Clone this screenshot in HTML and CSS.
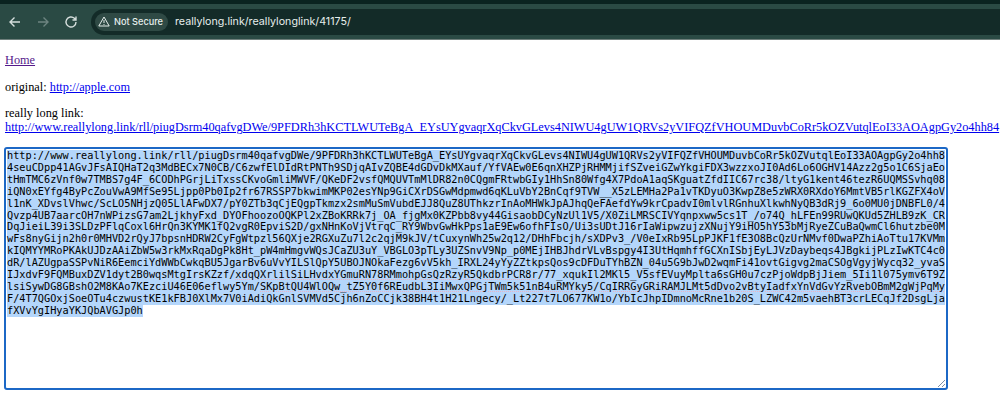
FILE: index.html
```html
<!DOCTYPE html>
<html lang="en">
<head>
<meta charset="utf-8">
<title>reallylong.link</title>
<link rel="stylesheet" href="styles.css">
</head>
<body>
<header class="toolbar">
  <div class="nav">
    <svg class="icon" width="16" height="16" viewBox="0 0 16 16"><path d="M13 8H3M7.5 3.5 3 8l4.5 4.5"/></svg>
    <svg class="icon dim" width="16" height="16" viewBox="0 0 16 16"><path d="M3 8h10M8.5 3.5 13 8l-4.5 4.5"/></svg>
    <svg class="icon" width="16" height="16" viewBox="0 0 16 16"><path d="M13 8a5 5 0 1 1-1.6-3.7L13 6M13 2.5V6H9.5"/></svg>
  </div>
  <div class="omnibox">
    <div class="chip">
      <svg class="warn" width="12" height="11" viewBox="0 0 12 11"><path d="M6 1 11.2 10H.8Z"/><path d="M6 4v3M6 8v.9"/></svg>
      <span>Not Secure</span>
    </div>
    <span class="url">reallylong.link/reallylonglink/41175/</span>
  </div>
</header>
<main class="page">
  <p class="para"><a class="visited" href="#home">Home</a></p>
  <p class="para tight">original: <a class="link" href="#apple">http://apple.com</a></p>
  <p class="para long">really long link:<br><a class="link" href="#long">http://www.reallylong.link/rll/piugDsrm40qafvgDWe/9PFDRh3hKCTLWUTeBgA_EYsUYgvaqrXqCkvGLevs4NIWU4gUW1QRVs2yVIFQZfVHOUMDuvbCoRr5kOZVutqlEoI33AOAgpGy2o4hh84</a></p>
  <div class="area">
    <div class="ln">http://www.reallylong.link/rll/piugDsrm40qafvgDWe/9PFDRh3hKCTLWUTeBgA_EYsUYgvaqrXqCkvGLevs4NIWU4gUW1QRVs2yVIFQZfVHOUMDuvbCoRr5kOZVutqlEoI33AOAgpGy2o4hh8</div>
    <div class="ln">4seuCDpp41AGvJFsAIQHaT2q3MdBECx7N0CB/C6zwfElDIdRtPNTh9SDjqAIvZQBE4dGDvDkMXauf/YfVAEw0E6qnXHZPjRHMMjifSZveiGZwYkgiFDX3wzzxoJI0Ad6Lo6OGHV14Azz2g5o1C6SjaEo</div>
    <div class="ln">tHmTMC6zVnf0w7TMBS7g4F_6CODhPGrjLiTxssCKvoGmliMWVF/QKeDF2vsfQMQUVTmMlDR82n0CQgmFRtwbGIy1HhSn80Wfg4X7PdoA1aqSKguatZfdIIC67rc38/ltyG1kent46tezR6UQMSSvhq08</div>
    <div class="ln">iQN0xEYfg4ByPcZouVwA9MfSe95Ljpp0Pb0Ip2fr67RSSP7bkwimMKP02esYNp9GiCXrDSGwMdpmwd6qKLuVbY2BnCqf9TVW__X5zLEMHa2Pa1vTKDyuO3KwpZ8e5zWRX0RXdoY6MmtVB5rlKGZFX4oV</div>
    <div class="ln">l1nK_XDvslVhwc/ScLO5NHjzQ05LlAFwDX7/pY0ZTb3qCjEQgpTkmzx2smMuSmVubdEJJ8QuZ8UThkzrInAoMHWkJpAJhqQeFAefdYw9krCpadvI0mlvlRGnhuXlkwhNyQB3dRj9_6o0MU0jDNBFL0/4</div>
    <div class="ln">Qvzp4UB7aarcOH7nWPizsG7am2LjkhyFxd_DYOFhoozoOQKPl2xZBoKRRk7j_OA_fjgMx0KZPbb8vy44GisaobDCyNzUl1V5/X0ZiLMRSCIVYqnpxww5cs1T_/o74Q_hLFEn99RUwQKUd5ZHLB9zK_CR</div>
    <div class="ln">DqJieiL39i3SLDzPFlqCoxl6HrQn3KYMK1fQ2vgR0EpviS2D/gxNHnKoVjVtrqC_RY9WbvGwHkPps1aE9Ew6ofhFIsO/Ui3sUDtJ16rIaWipwzujzXNujY9iHO5hY53bMjRyeZCuBaQwmCl6hutzbe0M</div>
    <div class="ln">wFs8nyGijn2h0r0MHVD2rQyJ7bpsnHDRW2CyFgWtpzl56QXje2RGXuZu7l2c2qjM9kJV/tCuxynWh25w2q12/DHhFbcjh/sXDPv3_/V0eIxRb95LpPJKF1fE3O8BcQzUrNMvf0DwaPZhiAoTtu17KVMm</div>
    <div class="ln">kIQMYYMRoPKAkUJDzAAiZbW5w3rkMxRqaDgPk8Ht_pW4mHmgvWQsJCaZU3uY_VBGLO3pTLy3UZSnvV9Np_p0MEjIHBJhdrVLvBspgy4I3UtHqmhffGCXnISbjEyLJVzDaybeqs4JBgkijPLzIwKTC4c0</div>
    <div class="ln">dR/lAZUgpaSSPvNiR6EemciYdWWbCwkqBU5JgarBv6uVvYILSlQpY5UBOJNOkaFezg6vV5kh_IRXL24yYyZZtkpsQos9cDFDuTYhBZN_04u5G9bJwD2wqmFi41ovtGigvg2maCSOgVgyjWycq32_yvaS</div>
    <div class="ln">IJxdvF9FQMBuxDZV1dyt2B0wqsMtgIrsKZzf/<span class="typo">xdqQXrlilSiLHvdxYGmuRN78RMmohpGsQzRzyR5QkdbrPCR8r</span>/77_xqukIl2MKl5_V5sfEVuyMplta6sGH0u7czPjoWdpBjJiem_5Ii1l075ymv6T9Z</div>
    <div class="ln">lsiSywDG8GBshO2M8KAo7KEzciU46E06eflwy5Ym/<span class="typo">SKpBtQU4WlOQw_tZ5Y0f6REudbL3IiMwxQPGjTWm5k51nB4uRMYky5</span>/<span class="typo">CqIRRGyGRiRAMJLMt5dDvo2vBtyIadfxYnVdGvYzRvebOBmM2gWjPqMy</span></div>
    <div class="ln">F/4T7QGOxjSoeOTu4czwustKE1kFBJ0XlMx7V0iAdiQkGnlSVMVd5Cjh6nZoCCjk38BH4t1H21Lngecy/_Lt227t7LO677KW1o/YbIcJhpIDmnoMcRne1b20S_LZWC42m5vaehBT3crLECqJf2DsgLja</div>
    <div class="ln">fXVvYgIHyaYKJQbAVGJp0h</div>
    <svg class="grip" width="10" height="10" viewBox="0 0 10 10"><path d="M9 2 2 9M9 6 6 9"/></svg>
  </div>
</main>
</body>
</html>
```
FILE: styles.css
```css
html, body {
  margin: 0;
  padding: 0;
  height: 420px;
  overflow: hidden;
  background: #fff;
}

.toolbar {
  box-sizing: border-box;
  height: 40px;
  border-top: 4px solid #0a2320;
  border-bottom: 1px solid #6f7f7c;
  background: #2a4a44;
  display: flex;
  align-items: center;
  padding-left: 7px;
  font-family: "Inter", "Liberation Sans", sans-serif;
  color: #e6eeec;
}

.nav {
  display: flex;
  gap: 12px;
  width: 84px;
  flex: none;
}

.icon {
  fill: none;
  stroke: #d5dedc;
  stroke-width: 1.4;
}

.icon.dim {
  stroke: #6d8480;
}

.omnibox {
  flex: 1;
  height: 26px;
  background: #132b28;
  border-radius: 13px 0 0 13px;
  display: flex;
  align-items: center;
  padding-left: 4px;
  gap: 7px;
}

.chip {
  display: flex;
  align-items: center;
  gap: 4px;
  height: 18px;
  width: 73px;
  box-sizing: border-box;
  padding-left: 3px;
  border-radius: 9px;
  background: #2f4a45;
  font-size: 9.2px;
  font-weight: 500;
  white-space: nowrap;
}

.warn {
  fill: none;
  stroke: #e6eeec;
  stroke-width: 1;
  flex: none;
}

.url {
  font-size: 10.7px;
  white-space: nowrap;
}

.page {
  padding: 13px 0 0 5px;
  font-family: "Liberation Serif", "Times New Roman", serif;
  font-size: 12.3px;
  line-height: 14px;
  color: #000;
}

.para {
  margin: 0 0 13px;
}

.tight {
  margin-bottom: 12px;
}

.long {
  white-space: nowrap;
  margin-bottom: 14px;
}

.visited {
  color: #551a8b;
}

.link {
  color: #0000ee;
}

.area {
  position: relative;
  box-sizing: border-box;
  width: 944px;
  height: 243px;
  margin: -1px 0 0 -1px;
  padding: 1px 1px;
  border: 2px solid #1c68c6;
  border-radius: 3px;
  font-family: "DejaVu Sans Mono", "Liberation Mono", monospace;
  font-size: 10.25px;
  line-height: 11.92px;
  color: #000;
}

.ln {
  width: max-content;
  height: 11.92px;
  background: #b4d6fb;
  white-space: nowrap;
}

.typo {
  text-decoration: underline dotted #eab4c4;
  text-underline-offset: 1px;
}

.grip {
  position: absolute;
  right: 0;
  bottom: 0;
  fill: none;
  stroke: #7a8ea8;
  stroke-width: 1;
}
```
